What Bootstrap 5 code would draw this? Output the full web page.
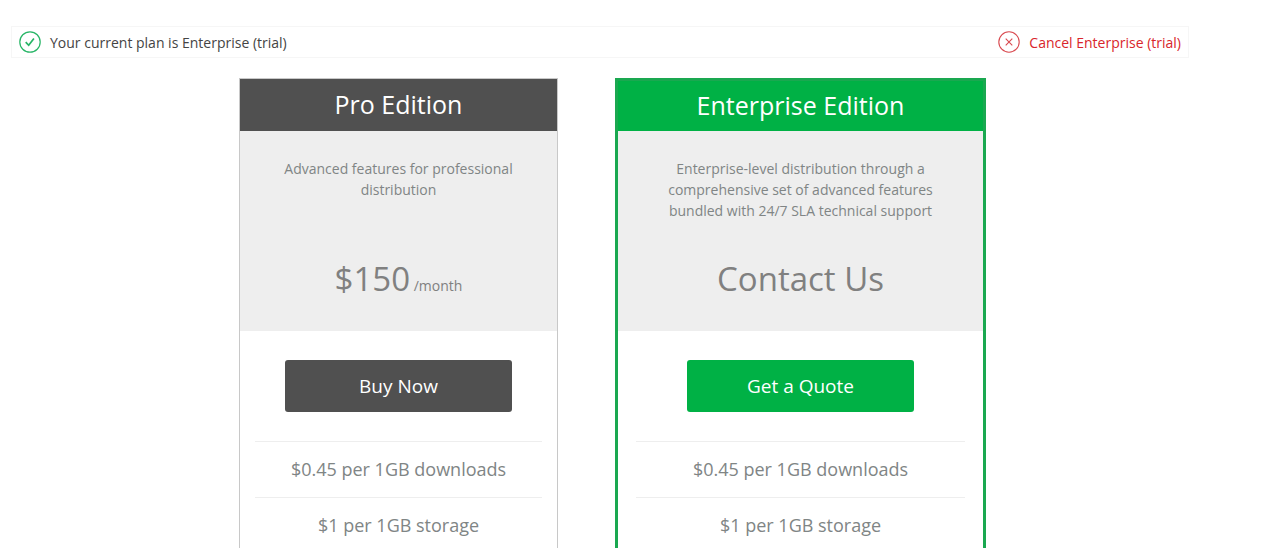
<!DOCTYPE html>
<html lang="en">
<head>
<meta charset="utf-8">
<meta name="viewport" content="width=device-width, initial-scale=1">
<title>Plans</title>
<link href="https://cdn.jsdelivr.net/npm/bootstrap@5.3.0/dist/css/bootstrap.min.css" rel="stylesheet">
<style>
  body { font-family: "Open Sans", "Noto Sans", sans-serif; font-size: 14px; color: #444; }
  .page { padding: 26px 91px 0 11px; }
  .plan-bar { border: 1px solid #f6f6f6; padding: 4px 7px; line-height: 21px; }
  .plan-bar svg { width: 22px; height: 22px; }
  .plan-bar .bar-item { gap: 9px; }
  .cancel-link { color: #d9252b; }
  .plans { gap: 57px; padding: 20px 0 0 25px; }
  .plan { border: 1px solid #c8c8c8; border-radius: 0; width: 319px; color: #808585; }
  .plan-wide { border: 3px solid #1aa850; width: 371px; }
  .plan-head { background: #505050; color: #fff; font-size: 25px; line-height: 50px; padding-bottom: 2px; margin: 0; font-weight: 400; }
  .plan-wide .plan-head { background: #00b145; line-height: 48px; }
  .plan-intro { background: #eee; height: 200px; padding: 27px 40px 0; }
  .plan-intro p { font-size: 14px; line-height: 21px; height: 84px; margin: 0; }
  .plan-price { font-size: 33px; line-height: 74px; color: #808080; }
  .plan-price small { font-size: 14px; }
  .plan-btn, .plan-btn:hover { color: #fff; background: #505050; }
  .plan-btn { width: 227px; height: 52px; border-radius: 3px; font-size: 19px; margin: 29px auto; }
  .plan-wide .plan-btn { background: #00b145; }
  .plan-list { margin: 0 15px; font-size: 18px; }
  .plan-wide .plan-list { margin: 0 18px; }
  .plan-list li { border-top: 1px solid #eee; line-height: 55px; }
</style>
</head>
<body>
<main class="page">
  <div class="plan-bar d-flex justify-content-between align-items-center">
    <div class="bar-item d-flex align-items-center">
      <svg viewBox="0 0 22 22" fill="none" stroke="#27b566" aria-hidden="true"><circle cx="11" cy="11" r="10.2" stroke-width="1.2"/><path d="M6.7 11.2l3 3.1 5.2-6.8" stroke-width="1.7"/></svg>
      <span>Your current plan is Enterprise (trial)</span>
    </div>
    <a href="#" class="cancel-link bar-item d-flex align-items-center text-decoration-none">
      <svg viewBox="0 0 22 22" fill="none" stroke="#d94a50" aria-hidden="true"><circle cx="11" cy="11" r="10.2" stroke-width="1.1"/><path d="M7.7 7.7l6.6 6.6M14.3 7.7l-6.6 6.6" stroke-width="1.1"/></svg>
      <span>Cancel Enterprise (trial)</span>
    </a>
  </div>
  <div class="plans d-flex justify-content-center text-center">
    <section class="plan">
      <h2 class="plan-head">Pro Edition</h2>
      <div class="plan-intro">
        <p>Advanced features for professional distribution</p>
        <div class="plan-price">$150<small> /month</small></div>
      </div>
      <button type="button" class="btn plan-btn d-block">Buy Now</button>
      <ul class="plan-list list-unstyled">
        <li>$0.45 per 1GB downloads</li>
        <li>$1 per 1GB storage</li>
      </ul>
    </section>
    <section class="plan plan-wide">
      <h2 class="plan-head">Enterprise Edition</h2>
      <div class="plan-intro">
        <p>Enterprise-level distribution through a comprehensive set of advanced features bundled with 24/7 SLA technical support</p>
        <div class="plan-price">Contact Us</div>
      </div>
      <button type="button" class="btn plan-btn d-block">Get a Quote</button>
      <ul class="plan-list list-unstyled">
        <li>$0.45 per 1GB downloads</li>
        <li>$1 per 1GB storage</li>
      </ul>
    </section>
  </div>
</main>
<script src="https://cdn.jsdelivr.net/npm/bootstrap@5.3.0/dist/js/bootstrap.bundle.min.js"></script>
</body>
</html>
